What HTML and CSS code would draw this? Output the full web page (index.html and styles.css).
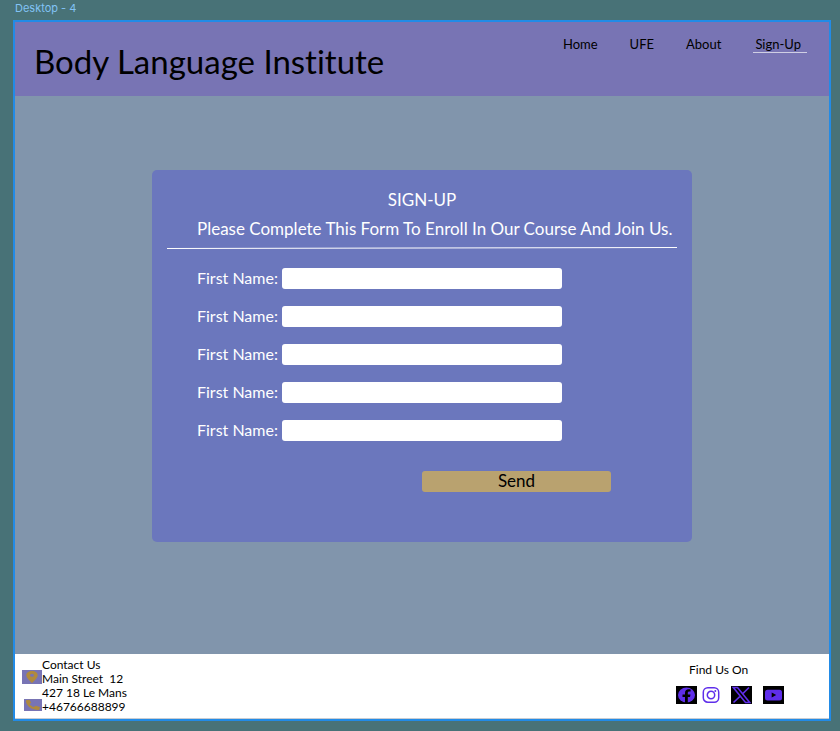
FILE: index.html
```html
<!DOCTYPE html>
<html lang="en">
<head>
<meta charset="utf-8">
<meta name="viewport" content="width=device-width, initial-scale=1">
<title>Body Language Institute</title>
<link rel="stylesheet" href="styles.css">
</head>
<body>
<div class="frame-label">Desktop - 4</div>
<div class="frame">
  <header class="header">
    <h1 class="brand">Body Language Institute</h1>
    <nav class="nav">
      <a href="#home">Home</a>
      <a href="#ufe">UFE</a>
      <a href="#about">About</a>
      <a href="#signup" class="current">Sign-Up</a>
    </nav>
  </header>
  <main class="main">
    <form class="card" id="signup">
      <h2 class="title">SIGN-UP</h2>
      <p class="intro">Please Complete This Form To Enroll In Our Course And Join Us.</p>
      <svg class="rule" viewBox="0 0 510 2" preserveAspectRatio="none" aria-hidden="true"><path d="M0 1.5L510 .5" stroke="#fff"/></svg>
      <div class="fields">
        <div class="field"><label for="f1">First Name:</label><input id="f1" type="text"></div>
        <div class="field"><label for="f2">First Name:</label><input id="f2" type="text"></div>
        <div class="field"><label for="f3">First Name:</label><input id="f3" type="text"></div>
        <div class="field"><label for="f4">First Name:</label><input id="f4" type="text"></div>
        <div class="field"><label for="f5">First Name:</label><input id="f5" type="text"></div>
      </div>
      <button class="send" type="submit">Send</button>
    </form>
  </main>
  <footer class="footer">
    <div class="contact">
      <div class="contact-icons">
        <svg width="20" height="14" viewBox="0 0 20 14" aria-hidden="true"><path fill="#7874b4" d="M0 0h20v14H0z"/><path fill="#b08a3c" fill-rule="evenodd" d="M10 1C6.800 1 4.300 2.700 4.300 5.200 4.300 8.200 10 13 10 13s5.700-4.800 5.700-7.800C15.700 2.700 13.200 1 10 1zm0 2.800a2 1.500 0 1 1 0 3 2 1.500 0 1 1 0-3z"/></svg>
        <svg width="18" height="12" viewBox="0 0 17 12" preserveAspectRatio="none" aria-hidden="true"><path fill="#7874b4" d="M0 0h17v12H0z"/><path fill="#b08a3c" d="M2.200 1.200 5.200.8 6.800 3.700 5.200 5c.8 1.400 2.200 2.300 3.900 3l1.900-1.200 4 1.300-.5 2.400c-.1.300-.5.500-.9.500C7.500 11 2 7.200 1.800 1.800c0-.3.100-.5.400-.6z"/></svg>
      </div>
      <address class="address">Contact Us<br>Main Street&nbsp; 12<br>427 18 Le Mans<br>+46766688899</address>
    </div>
    <div class="social">
      <p class="find">Find Us On</p>
      <div class="links">
        <a href="#facebook" aria-label="Facebook"><svg width="21" height="18" viewBox="0 0 21 18"><path d="M0 0h21v18H0z"/><ellipse cx="10.500" cy="9" rx="8.500" ry="7.600" fill="#5f2eea"/><path d="M9 18v-7H6.500V8.500H9V7c0-2.400 1.400-3.700 3.700-3.700.8 0 1.500.1 1.900.2v2h-1.200c-1.200 0-1.600.6-1.600 1.400v1.600h2.700l-.5 2.500h-2.200v7z"/></svg></a>
        <a href="#instagram" aria-label="Instagram" class="insta"><svg width="18" height="18" viewBox="0 0 18 18" fill="none" stroke="#5f2eea" stroke-width="1.500"><rect x="1.300" y="1.800" width="15.400" height="14.400" rx="4.500"/><circle cx="9" cy="9" r="3.700"/><circle cx="13.300" cy="5" r="1" fill="#5f2eea" stroke="none"/></svg></a>
        <a href="#x" aria-label="X"><svg width="21" height="18" viewBox="0 0 21 18"><path d="M0 0h21v18H0z"/><path d="M2.300 1.500h4.200l12.200 15h-4.200zM18 1.500l-6.700 6.600M9.300 10.200 2.500 16.500" fill="none" stroke="#5f2eea" stroke-width="1.600"/></svg></a>
        <a href="#youtube" aria-label="YouTube"><svg width="21" height="18" viewBox="0 0 21 18"><path d="M0 0h21v18H0z"/><rect x="2" y="3.700" width="17" height="10.800" rx="2.500" fill="#5f2eea"/><path d="M8.700 6.600v4.800L13.200 9z"/></svg></a>
      </div>
    </div>
  </footer>
</div>
</body>
</html>
```
FILE: styles.css
```css
* { box-sizing: border-box; }
body {
  margin: 0;
  padding: 0 9px 10px 13px;
  min-height: 100vh;
  display: flex;
  flex-direction: column;
  background: #487277;
  color: #000;
  font-family: Lato, "Liberation Sans", sans-serif;
  font-variant-ligatures: none;
}
h1, h2, p { margin: 0; font-weight: 400; }
a { color: inherit; text-decoration: none; }
.frame-label {
  height: 20px;
  padding-left: 2px;
  font: 11px/16px Inter, sans-serif;
  color: #82c3f5;
}
.frame {
  flex: 1;
  display: flex;
  flex-direction: column;
  border: 2px solid #228be6;
}
.header {
  display: flex;
  justify-content: space-between;
  align-items: flex-start;
  min-height: 74px;
  padding: 14px 22px 0 19px;
  background: #7874b4;
}
.brand { font-size: 33px; line-height: 50px; }
.nav {
  display: flex;
  gap: 32px;
  font-size: 13px;
  line-height: 16px;
}
.nav .current { padding: 0 6px 0 2px; border-bottom: 1px solid #d0cfe4; }
.main {
  flex: 1;
  display: flex;
  justify-content: center;
  align-items: flex-start;
  padding: 74px 16px;
  background: #8195ac;
}
.card {
  width: 100%;
  max-width: 540px;
  min-height: 372px;
  padding: 19px 15px;
  display: flex;
  flex-direction: column;
  border-radius: 5px;
  background: #6b77bd;
  color: #fff;
  font-size: 17px;
  line-height: 21px;
}
.title { font-size: 17px; text-align: center; }
.intro { margin: 8px 0; padding-left: 30px; }
.rule { width: 100%; height: 2px; }
.fields {
  display: grid;
  gap: 17px;
  margin: 19px 0 30px 30px;
}
.field { display: flex; }
.field label { width: 85px; font-size: 16px; line-height: 19px; white-space: nowrap; }
.field input {
  width: 280px;
  height: 21px;
  border: 0;
  border-radius: 3px;
  background: #fff;
}
.send {
  align-self: flex-end;
  width: 189px;
  height: 21px;
  margin-right: 66px;
  padding: 0 0 2px;
  border: 0;
  border-radius: 3px;
  background: #b9a26f;
  color: #000;
  font: inherit;
  line-height: 19px;
}
.footer {
  display: flex;
  justify-content: space-between;
  min-height: 65px;
  padding: 4px 45px 4px 7px;
  border-bottom: 1px solid #c8ccd2;
  background: #fff;
}
.contact { display: flex; }
.contact-icons {
  display: flex;
  flex-direction: column;
  align-items: flex-end;
  gap: 15px;
  padding-top: 12px;
}
.address { font-size: 12px; font-style: normal; line-height: 14px; }
.social { display: flex; flex-direction: column; gap: 8px; padding-top: 4px; }
.find { padding-left: 13px; font-size: 12px; line-height: 16px; }
.links { display: flex; gap: 11px; }
.links svg { display: block; }
.insta { margin-left: -6px; }
```
